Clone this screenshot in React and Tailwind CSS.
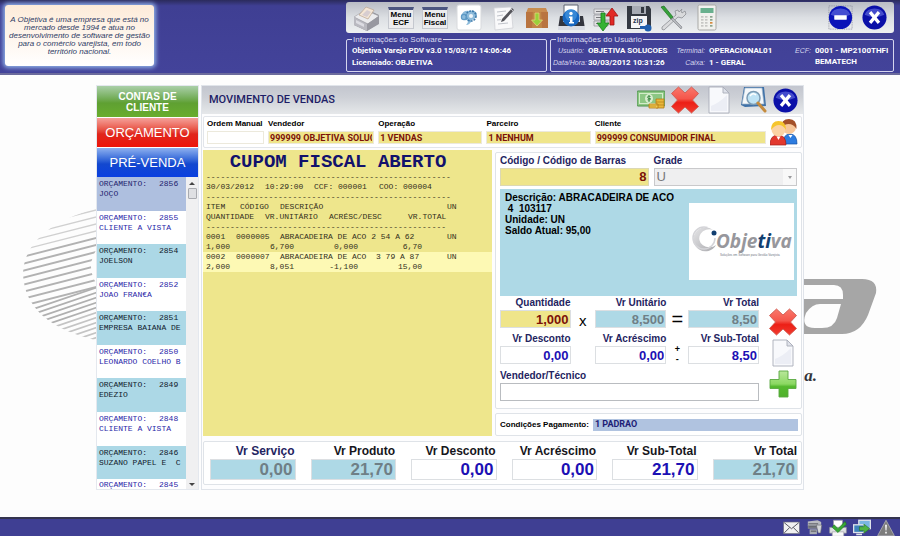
import React from "react";

const SANS = "font-['Liberation_Sans',Arial,sans-serif]";
const MONO = "font-['Liberation_Mono','Courier_New',monospace]";
const ROBOTO = "font-['Roboto','Liberation_Sans',sans-serif]";

/* ---------- icons ---------- */

function Svg({ w = 28, h = 28, box = "0 0 28 28", children }) {
  return (
    <svg width={w} height={h} viewBox={box} aria-hidden="true" className="block shrink-0">
      {children}
    </svg>
  );
}

const PrinterFiscal = () => (
  <Svg>
    <path d="M1 14 13 5l13 6v8L14 27 1 21z" fill="#8d8d94" />
    <path d="M1 13 12 6l14 6-11 8z" fill="#ececee" stroke="#a8a8ae" strokeWidth=".7" />
    <path d="M1 13v8l13 6v-7z" fill="#b9b9c0" />
    <path d="M14 20v7l12-7v-8z" fill="#9898a0" />
    <path d="m6 11 7-8 8 3-6 9z" fill="#f4e6d6" stroke="#b9a38f" strokeWidth=".7" />
    <path d="m9 11 5-5 4 2-4 5z" fill="#d7cdd0" />
    <path d="m3 16 8 4v3l-8-4z" fill="#dcdce2" />
  </Svg>
);

const MenuIcon = ({ a, b }) => (
  <span
    className={`flex h-[22px] w-[26px] flex-col items-center justify-center border border-[#c5c8cf] border-t-[3px] border-t-[#4c5680] bg-[#ececee] text-[8px] leading-[8px] font-bold text-black ${SANS}`}
  >
    <span>{a}</span>
    <span>{b}</span>
  </span>
);

const GearIcon = () => (
  <Svg>
    <rect x="2" y="1" width="24" height="25" rx="2" fill="#fff" stroke="#d8dadd" />
    <path d="M6 12q2-6 8-5 6-2 8 3-1 5-5 6-2 5-6 5 3-3 1-5-5 1-6-4z" fill="#8dbbdb" />
    <circle cx="16" cy="12" r="5" fill="none" stroke="#3d7aab" strokeWidth="1.600" strokeDasharray="2 1" />
    <circle cx="9" cy="13" r="2.600" fill="none" stroke="#5d9ac6" strokeWidth="1.200" />
    <circle cx="16" cy="12" r="2" fill="#eef5fa" />
  </Svg>
);

const NoteIcon = () => (
  <Svg>
    <path d="m5 4 17-1 2 21-18 2z" fill="#f9f9fa" stroke="#cfd1d6" strokeWidth=".8" />
    <path d="m8 8 9-1M8 12l6-1M8 16l4-.3M9 20l10-1" stroke="#b9bcc4" strokeWidth=".9" />
    <path d="M23 4 13 15l-1 3 3-1L25 6z" fill="#55555b" />
    <path d="m22 5 2 2" stroke="#bcbcc3" />
  </Svg>
);

const BoxDown = () => (
  <Svg>
    <path d="M5 4h18l2 5H3z" fill="#c98b50" />
    <path d="M3 8h22v16H3z" fill="#b97440" />
    <path d="M10 4h8l1 20H9z" fill="#c6924b" opacity=".6" />
    <path d="M12 9h4v7h3.500L14 22l-5.500-6H12z" fill="#9ad03a" stroke="#e5d27a" strokeWidth=".8" />
  </Svg>
);

const PrinterInfo = () => (
  <Svg>
    <path d="M7 1h14v15H7z" fill="#fff" stroke="#5c6270" />
    <path d="M3 12h3v6h17v-6h3l2 13H1z" fill="#34363e" />
    <path d="M1 22h27v4H1z" fill="#d9dce3" />
    <circle cx="14" cy="14" r="8.500" fill="#1767c0" />
    <circle cx="14" cy="11" r="6" fill="#4c9fe4" opacity=".6" />
    <circle cx="14" cy="9.500" r="1.700" fill="#fff" />
    <path d="M12 12.500h3.500V18H17v1.500h-5V18h1v-4h-1z" fill="#fff" />
  </Svg>
);

const SyncDb = () => (
  <Svg>
    <path d="M3 5h17v5H3zM3 11h17v5H3zM3 17h14v5H3z" fill="#e2e2e4" stroke="#9b9ba0" strokeWidth=".8" />
    <path d="M5 7.500h8M5 13.500h8M5 19.500h6" stroke="#77777c" />
    <path d="M10 9h4v10h4l-6 8-6-8h4z" fill="#34b233" stroke="#1b7d1d" strokeWidth=".8" />
    <path d="m21 4 6 8h-4v9h-4v-9h-4z" fill="#e22a25" stroke="#9f1512" strokeWidth=".8" />
  </Svg>
);

const FloppyZip = () => (
  <Svg>
    <path d="M2 2h22l2 3v20H2z" fill="#343942" />
    <path d="M7 2h14v8H7z" fill="#a7abb4" />
    <path d="M16 3h3v6h-3z" fill="#343942" />
    <path d="M6 12h16v12H6z" fill="#f4f5f7" />
    <text x="8" y="19" fontSize="7" fontWeight="700" fontFamily="Liberation Sans" fill="#24344f">zip</text>
    <circle cx="23" cy="24" r="3.500" fill="#1f5fae" />
    <path d="M15 22h6v3h-6z" fill="#1f5fae" />
  </Svg>
);

const ToolsIcon = () => (
  <Svg>
    <path d="m23 5-3 3-1-2-3 1 1 4L3 23q-1 3 2 3l14-13 4 1 4-4-1-3-3 2-1-2z" fill="#d9dadc" stroke="#8d8f94" strokeWidth=".8" />
    <path d="m2 3 3-1 9 11-2 2z" fill="#36a13a" stroke="#1d6e22" strokeWidth=".7" />
    <path d="m14 14 9 9-1 2-10-10z" fill="#b7b9be" stroke="#7b7d83" strokeWidth=".6" />
  </Svg>
);

const CalcIcon = () => (
  <Svg>
    <rect x="5" y="1" width="18" height="25" rx="1.500" fill="#f1f1ee" stroke="#a9a9a6" />
    <rect x="7.500" y="4" width="13" height="5" fill="#69b08e" />
    {[12, 15, 18, 21].map((y) => (
      <g key={y}>
        <rect x="8" y={y} width="2.500" height="1.700" fill="#c6c6c4" />
        <rect x="12" y={y} width="2.500" height="1.700" fill="#c6c6c4" />
        <rect x="17" y={y} width="2.500" height="1.700" fill={y === 18 ? "#d78a3d" : "#8aa58d"} />
      </g>
    ))}
  </Svg>
);

const RoundMinus = () => (
  <Svg w={25} h={25}>
    <rect x="1" y="1" width="26" height="26" fill="none" stroke="#77798c" strokeWidth=".8" strokeDasharray="1 1" />
    <circle cx="14" cy="14" r="13" fill="#0b14b8" />
    <path d="M3 11a11.500 10 0 0 1 22 0q-11 5-22 0z" fill="#5d66dc" opacity=".7" />
    <rect x="7" y="11.500" width="14" height="5" rx=".5" fill="#fff" />
  </Svg>
);

const RoundX = () => (
  <Svg w={25} h={25}>
    <circle cx="14" cy="14" r="13.500" fill="#0b10a8" />
    <path d="M3 11a11.500 10 0 0 1 22 0q-11 5-22 0z" fill="#5d66dc" opacity=".7" />
    <path d="m9 8 10 12M19 8 9 20" stroke="#fff" strokeWidth="3.600" />
  </Svg>
);

const MoneyIcon = () => (
  <Svg>
    <rect x="0" y="5" width="28" height="15" rx="1" fill="#8cc784" stroke="#4b8f4a" />
    <rect x="2.500" y="7.500" width="23" height="10" fill="none" stroke="#d3ecca" />
    <ellipse cx="12" cy="12.500" rx="4" ry="4.500" fill="#d8edcf" />
    <path d="M13.500 10.500q-3-1-3 .7t3 1.400q0 2.400-3 1.200M12 9v7" fill="none" stroke="#3f8a45" />
    <path d="M19 13h8v9h-8z" fill="#e9b83a" stroke="#b47b18" strokeWidth=".8" />
    <path d="M12 18h9v4h-9z" fill="#f2cb52" stroke="#b47b18" strokeWidth=".8" />
    <path d="M19 16h8M19 19h8M12 20h7" stroke="#b47b18" strokeWidth=".7" />
  </Svg>
);

const RedX = () => (
  <Svg>
    <defs>
      <linearGradient id="redx" x1="0" y1="0" x2="0" y2="1">
        <stop offset="0" stopColor="#f9796d" />
        <stop offset=".45" stopColor="#f5564b" />
        <stop offset=".6" stopColor="#ec1f16" />
        <stop offset="1" stopColor="#f23c30" />
      </linearGradient>
    </defs>
    <path d="M7.500 1 14 7l6.500-6L27.500 7.500 21.500 14l6 6.500-7 6.500L14 21l-6.500 6-7-6.500 6-6.500-6-6.500z" fill="url(#redx)" stroke="#cf5a50" strokeWidth=".9" strokeLinejoin="round" />
  </Svg>
);

const PageIcon = () => (
  <Svg>
    <path d="M4 1h14l6 6v20H4z" fill="#f8f9fc" stroke="#a9adb9" strokeWidth=".9" />
    <path d="M18 1v6h6z" fill="#dfe2ea" stroke="#a9adb9" strokeWidth=".9" />
    <path d="M6 20q8-3 16-11v16H6z" fill="#eceef5" />
  </Svg>
);

const SearchBook = () => (
  <Svg>
    <path d="M5 1h20l2 19-21 1-4-2z" fill="#3f71a8" />
    <path d="m6 2 17 0 2 16H3z" fill="#f5f8fb" stroke="#9fb4c9" strokeWidth=".7" />
    <circle cx="14.500" cy="12" r="6.500" fill="#bfe3f5" stroke="#7c9cb5" strokeWidth="1.500" />
    <path d="M11 10q3-4 6-1" stroke="#fff" strokeWidth="1.500" fill="none" />
    <path d="m19 17 7 8" stroke="#c58b3d" strokeWidth="3" strokeLinecap="round" />
  </Svg>
);

const PeopleIcon = () => (
  <Svg>
    <path d="M13 26q0-10 7-10t7 10z" fill="#2d7ce0" stroke="#1552a4" strokeWidth=".7" />
    <circle cx="19" cy="9" r="7" fill="#f7c79a" />
    <path d="M11 10q0-9 8-9t7.500 10q-3-5-8-5-4 0-7.500 4z" fill="#a4512a" />
    <path d="M0 27q0-10 8-10t8 10z" fill="#e2382e" stroke="#a31d17" strokeWidth=".7" />
    <circle cx="8.500" cy="11.500" r="7" fill="#fbd2a4" />
    <path d="M1 12q0-9 7.500-9t7.500 9q-3-5-7-5T1 12z" fill="#f5c52d" />
    <path d="m6.500 18.500 2 3.500 2-3.500z" fill="#fff" />
    <path d="m18.500 17 2 3 2-3z" fill="#fff" />
  </Svg>
);

const PlusIcon = () => (
  <Svg>
    <defs>
      <linearGradient id="plus" x1="0" y1="0" x2="0" y2="1">
        <stop offset="0" stopColor="#b9e79b" />
        <stop offset=".5" stopColor="#8bd862" />
        <stop offset=".6" stopColor="#55b92f" />
        <stop offset="1" stopColor="#4fb02b" />
      </linearGradient>
    </defs>
    <path d="M10 1h9v8.500h8v9h-8V27h-9v-8.500H1v-9h9z" fill="url(#plus)" stroke="#5aa842" strokeWidth=".9" />
  </Svg>
);

const Mail = () => (
  <Svg w={17} h={17}>
    <rect x="1" y="5" width="26" height="19" fill="#f1f1f1" stroke="#6d6d78" />
    <path d="m2 6 12 10L26 6M2 23l9-9M26 23l-9-9" fill="none" stroke="#55555f" strokeWidth="1.600" />
  </Svg>
);
const ServerMini = () => (
  <Svg w={17} h={17}>
    <path d="M3 4 19 2l6 3v6H3z" fill="#b9bbc1" />
    <path d="M3 10h20v6H3z" fill="#8d9097" />
    <path d="M6 17h12v8H6z" fill="#a8abb2" />
    <path d="M4 8h16M4 13h14M8 20h9" stroke="#4d4f57" strokeWidth="1.500" />
    <path d="M17 10h9l-2 13h-4z" fill="#d4d6da" stroke="#63656c" />
  </Svg>
);
const PrinterOk = () => (
  <Svg w={18} h={18}>
    <path d="M7 2h14v12H7z" fill="#fff" stroke="#9a9aa1" />
    <path d="M1 13h26v9H1z" fill="#dfe1e4" stroke="#8d9097" />
    <path d="M5 20h18v7H5z" fill="#f8f8f8" stroke="#9a9aa1" />
    <path d="m8 9 6 6L25 4l2 4-13 13L5 13z" fill="#39a935" stroke="#1e7a20" />
  </Svg>
);
const NetMini = () => (
  <Svg w={18} h={18}>
    <rect x="9" y="2" width="18" height="13" fill="#7ab6e2" stroke="#dfe3ea" strokeWidth="2" />
    <rect x="1" y="9" width="16" height="12" fill="#3f83bd" stroke="#dfe3ea" strokeWidth="2" />
    <path d="M5 24h9" stroke="#dfe3ea" strokeWidth="2.500" />
    <path d="M10 12h7V8l9 7-9 7v-4h-7z" fill="#4fb445" stroke="#22742a" />
  </Svg>
);
const Warn = () => (
  <Svg w={18} h={18}>
    <path d="m14 2 13 24H1z" fill="#7c7c7c" stroke="#b0b0b0" strokeWidth="1.300" />
    <path d="M12.500 9h3l-.7 9h-1.600zM12.700 20h2.600v2.600h-2.600z" fill="#f4f4f4" />
  </Svg>
);

/* ---------- background brand ---------- */

function Hatch() {
  const upper = Array.from({ length: 12 }, (_, i) => 222 + i * 7);
  const lower = Array.from({ length: 14 }, (_, i) => 307 + i * 5);
  return (
    <svg width="100" height="150" viewBox="0 200 100 150" aria-hidden="true" className="absolute top-[125px] left-0">
      <defs>
        <clipPath id="globe">
          <path d="M100 207Q24 228 23 274 25 325 100 341V288Q82 268 100 244Z" />
        </clipPath>
      </defs>
      <g clipPath="url(#globe)" fill="none">
        {upper.map((y, i) => (
          <path key={y} d={`M10 ${y + 10}L104 ${y - 14}`} stroke={i < 4 ? "#d0d0d0" : "#b2b2b2"} strokeWidth={i < 4 ? 1.3 : 2} />
        ))}
        {lower.map((y, i) => (
          <path key={y} d={`M10 ${y + 10}L104 ${y - 22}`} stroke={i < 5 ? "#b0b0b0" : "#c4c4c4"} strokeWidth="1.800" />
        ))}
      </g>
    </svg>
  );
}

function LetterMark() {
  return (
    <div className="absolute top-[203px] right-[20px]">
      <svg width="80" height="58" viewBox="800 278 80 58" aria-hidden="true" className="block">
        <path
          fillRule="evenodd"
          fill="#a6a6a6"
          d="M800 279H862Q878 279 876 293L868 315Q860 334 842 334H800ZM800 285V299H843V295Q843 285 834 285ZM841 304H820Q812 304 806 313 800 328 815 328H822Q834 328 837 318Z"
        />
      </svg>
      <p className="mt-[30px] pr-[63px] text-right font-['Liberation_Serif',serif] text-[17px] leading-[20px] font-bold text-[#33343a] italic">a.</p>
    </div>
  );
}

/* ---------- header ---------- */

const TOOLS = [
  ["Impressora fiscal", <PrinterFiscal />],
  ["", <MenuIcon a="Menu" b="ECF" />],
  ["", <MenuIcon a="Menu" b="Fiscal" />],
  ["Configurações", <GearIcon />],
  ["Anotações", <NoteIcon />],
  ["Importar", <BoxDown />],
  ["Relatórios", <PrinterInfo />],
  ["Sincronizar", <SyncDb />],
  ["Backup", <FloppyZip />],
  ["Ferramentas", <ToolsIcon />],
  ["Calculadora", <CalcIcon />],
];

function IconButton({ label, children }) {
  return (
    <button type="button" aria-label={label || undefined} className="flex shrink-0 items-center justify-center">
      {children}
    </button>
  );
}

function Header() {
  const term = "text-right text-[7px] font-normal text-[#d6d6ee] italic font-['Liberation_Sans',Arial,sans-serif]";
  return (
    <header className="flex border-b-2 border-[#6b6b9c] bg-linear-to-b from-[#2b2b5c] via-[#3f3f93] via-8% to-[#43439a] pt-[2px] pr-[6px] pb-px">
      <aside className="mt-[3px] ml-[5px] flex h-[61px] w-[149px] shrink-0 items-center justify-center rounded-[3px] bg-linear-to-b from-[#fdebd9] to-white text-center text-[8px] leading-[8px] whitespace-nowrap text-[#2f3c66] italic shadow-[0_0_4px_2px_#8fb0e6]">
        A Objetiva é uma empresa que está no<br />
        mercado desde 1994 e atua no<br />
        desenvolvimento de software de gestão<br />
        para o comércio varejista, em todo<br />
        território nacional.
      </aside>
      <div className="ml-[192px] flex min-w-0 flex-1 flex-col">
        <nav className="flex h-[31px] items-center justify-between rounded-[3px] bg-linear-to-b from-[#b9bcc4] via-[#dcdfe3] to-[#eef0f1] px-[7px]">
          <div className="flex gap-[6px]">
            {TOOLS.map(([label, icon], i) => (
              <IconButton key={i} label={label}>
                <span className="flex w-[28px] justify-center">{icon}</span>
              </IconButton>
            ))}
          </div>
          <div className="flex gap-[9px]">
            <IconButton label="Minimizar"><RoundMinus /></IconButton>
            <IconButton label="Fechar"><RoundX /></IconButton>
          </div>
        </nav>
        <div className="mt-[2px] flex gap-[3px] text-[8px] leading-[12px] text-white">
          <fieldset className="h-[37px] w-[201px] shrink-0 rounded-[2px] border border-[#d5d5ee] px-[5px]">
            <legend className="px-[1px] leading-[9px] text-[#dcdcf2]">Informações do Software</legend>
            <p className={`pt-px font-bold whitespace-nowrap ${ROBOTO}`}>Objetiva Varejo PDV v3.0 15/03/12 14:06:46</p>
            <p className={`font-bold ${ROBOTO}`}>Licenciado: OBJETIVA</p>
          </fieldset>
          <fieldset className="h-[37px] min-w-0 flex-1 rounded-[2px] border border-[#d5d5ee] px-[2px]">
            <legend className="ml-[3px] px-[1px] leading-[9px] text-[#dcdcf2]">Informações do Usuário</legend>
            <dl className={`grid grid-cols-[31px_82px_31px_67px_31px_auto] justify-start gap-x-[4px] pt-px font-bold whitespace-nowrap ${ROBOTO}`}>
              <dt className={term}>Usuário:</dt>
              <dd>OBJETIVA SOLUCOES</dd>
              <dt className={term}>Terminal:</dt>
              <dd>OPERACIONAL01</dd>
              <dt className={term}>ECF:</dt>
              <dd className="row-span-2 leading-[11px]">0001 - MP2100THFI<br />BEMATECH</dd>
              <dt className={term}>Data/Hora:</dt>
              <dd>30/03/2012 10:31:26</dd>
              <dt className={term}>Caixa:</dt>
              <dd>1 - GERAL</dd>
            </dl>
          </fieldset>
        </div>
      </div>
    </header>
  );
}

/* ---------- sidebar ---------- */

const ORDERS = [
  ["2856", "JOÇO"],
  ["2855", "CLIENTE A VISTA"],
  ["2854", "JOELSON"],
  ["2852", "JOAO FRAN€A"],
  ["2851", "EMPRESA BAIANA DE"],
  ["2850", "LEONARDO COELHO B"],
  ["2849", "EDEZIO"],
  ["2848", "CLIENTE A VISTA"],
  ["2846", "SUZANO PAPEL E  C"],
  ["2845", ""],
];

function rowStyle(i) {
  if (i === 0) return "flex-1 pt-[2px] bg-[#aebfdf] text-[#24246e]";
  if (i === 9) return "h-[10px] bg-white pt-px text-[#2a1fa8]";
  return i % 2 ? "flex-1 pt-[2px] bg-white text-[#2a1fa8]" : "flex-1 pt-[2px] bg-[#acd8e6] text-[#10202c]";
}

function Sidebar() {
  return (
    <aside className="flex w-[103px] shrink-0 flex-col border border-[#e4e8ee] bg-white">
      <div className="flex flex-col gap-px text-white">
        <button type="button" className="h-[31px] bg-linear-to-b from-[#aacfa8] via-[#5fa032] via-55% to-[#69ad2d] text-[10px] leading-[11px] font-bold">
          CONTAS DE<br />CLIENTE
        </button>
        <button type="button" className="h-[29px] bg-linear-to-b from-[#f4a09a] via-[#e0261c] via-55% to-[#ee1408] text-[13px]">ORÇAMENTO</button>
        <button type="button" className="h-[29px] bg-linear-to-b from-[#8fb0ee] via-[#1348cf] via-55% to-[#0a3fe0] text-[13px]">PRÉ-VENDA</button>
      </div>
      <div className="flex h-[312px]">
        <ul className={`flex min-w-0 flex-1 flex-col text-[8px] leading-[10px] ${MONO}`}>
          {ORDERS.map(([num, name], i) => (
            <li key={num} className={`px-[2px] whitespace-pre ${rowStyle(i)}`}>
              <div className="flex gap-[12px]"><span>ORÇAMENTO:</span><span>{num}</span></div>
              {name && <div>{name}</div>}
            </li>
          ))}
        </ul>
        <div className="flex w-[12px] flex-col items-center bg-[#f0f0f1]">
          <span className="mt-[5px] border-x-[3px] border-b-[3px] border-x-transparent border-b-[#444]" />
          <span className="mt-[3px] h-[11px] w-[9px] rounded-[1px] border border-[#a9abb0] bg-[#dfe0e3]" />
          <span className="mt-auto mb-[3px] border-x-[3px] border-t-[3px] border-x-transparent border-t-[#444]" />
        </div>
      </div>
    </aside>
  );
}

/* ---------- sales panel ---------- */

function TopField({ id, label, value, tone }) {
  return (
    <div className="min-w-0">
      <label htmlFor={id} className="block text-[8px] leading-[14px] font-bold whitespace-nowrap text-black">{label}</label>
      <input
        id={id}
        defaultValue={value}
        className={`block h-[13px] w-full border border-[#ece9dc] px-px text-[9px] leading-[11px] font-bold text-[#7c1208] ${ROBOTO} ${tone}`}
      />
    </div>
  );
}

const DASH = "-".repeat(51);
const ITEMS = [
  ["0001", "0000005", "ABRACADEIRA DE ACO 2 54 A 62", "1,000", "6,700", "0,000", "6,70"],
  ["0002", "0000007", "ABRACADEIRA DE ACO  3 79 A 87", "2,000", "8,051", "-1,100", "15,00"],
];

function Receipt() {
  return (
    <section className={`w-[289px] shrink-0 bg-[#eee68c] ${MONO} text-[8px] leading-[10px] text-[#33301c]`}>
      <h2 className="pt-[2px] pr-[19px] text-center text-[19px] leading-[20px] font-bold text-[#12126c]">CUPOM FISCAL ABERTO</h2>
      <div className="flex flex-col pl-[3px]">
        <p>{DASH}</p>
        <p className="flex whitespace-nowrap">
          <span className="w-[59px]">30/03/2012</span>
          <span className="w-[49px]">10:29:00</span>
          <span className="w-[65px]">CCF: 000001</span>
          <span>COO: 000004</span>
        </p>
        <p>{DASH}</p>
      </div>
      <table className="w-full table-fixed border-collapse whitespace-pre">
        <colgroup>
          <col className="w-[33px]" /><col className="w-[29px]" /><col className="w-[15px]" /><col className="w-[14px]" />
          <col className="w-[35px]" /><col className="w-[29px]" /><col className="w-[50px]" /><col className="w-[14px]" />
          <col className="w-[25px]" /><col />
        </colgroup>
        <thead className="text-left">
          <tr>
            <th className="p-0 pl-[3px] font-normal">ITEM</th>
            <th colSpan={2} className="p-0 pl-[4px] font-normal">CÓDIGO</th>
            <th colSpan={6} className="p-0 font-normal">DESCRIÇÃO</th>
            <th className="p-0 font-normal">UN</th>
          </tr>
          <tr>
            <th colSpan={2} className="p-0 pl-[3px] font-normal">QUANTIDADE</th>
            <th colSpan={3} className="p-0 font-normal">VR.UNITÁRIO</th>
            <th colSpan={2} className="p-0 font-normal">ACRÉSC/DESC</th>
            <th colSpan={3} className="p-0 font-normal">VR.TOTAL</th>
          </tr>
          <tr><td colSpan={10} className="p-0 pl-[3px]">{"-".repeat(50)}</td></tr>
        </thead>
        {ITEMS.map(([n, code, desc, qty, unit, adj, total], i) => (
          <tbody key={n} className={i ? "bg-[#fdf9b4]" : ""}>
            <tr>
              <td className="p-0 pl-[3px]">{n}</td>
              <td colSpan={2} className="p-0">{code}</td>
              <td colSpan={6} className="p-0">{desc}</td>
              <td className="p-0">UN</td>
            </tr>
            <tr>
              <td colSpan={2} className="p-0 pl-[3px]">{qty}</td>
              <td colSpan={2} className="p-0 text-right">{unit}</td>
              <td colSpan={2} className="p-0 text-right">{adj}</td>
              <td colSpan={2} className="p-0 text-right">{total}</td>
              <td colSpan={2} className="p-0" />
            </tr>
          </tbody>
        ))}
      </table>
    </section>
  );
}

function ProductLogo() {
  return (
    <div className="flex h-[77px] w-[105px] shrink-0 items-center justify-center bg-white">
      <svg width="105" height="77" viewBox="0 0 105 77" role="img" aria-label="Objetiva">
        <defs>
          <linearGradient id="ball" x1="0" y1="0" x2="1" y2="1">
            <stop offset="0" stopColor="#e6e6e8" />
            <stop offset="1" stopColor="#a9a9ad" />
          </linearGradient>
        </defs>
        <path d="M24 27A12 12 0 1 0 27 42 10 9 0 1 1 24 27Z" fill="url(#ball)" />
        <circle cx="15" cy="35" r="11" fill="none" stroke="#d4d4d8" strokeWidth="1.500" strokeDasharray="55 14" />
        <circle cx="25" cy="30" r="2.500" fill="#123f70" />
        <text x="27" y="45" fontFamily="Open Sans, sans-serif" fontSize="19" fontWeight="700" fontStyle="italic" fill="#97979c">
          Obje<tspan fill="#123f70">ti</tspan>va
        </text>
        <text x="31" y="53" fontFamily="Liberation Sans, sans-serif" fontSize="3" fill="#6e7480">Soluções em Software para Gestão Varejista</text>
      </svg>
    </div>
  );
}

function Amount({ id, label, value, tone }) {
  return (
    <div className="flex min-w-0 flex-col">
      <label htmlFor={id} className="text-right text-[10px] leading-[14px] font-bold whitespace-nowrap text-[#24245f]">{label}</label>
      <input
        id={id}
        defaultValue={value}
        className={`h-[18px] w-full border border-[#dcdfe2] px-px text-right text-[13px] leading-[16px] font-bold ${tone}`}
      />
    </div>
  );
}

function ItemEntry() {
  return (
    <section className="flex flex-1 flex-col rounded-[2px] border border-[#dfe3e8] bg-white px-[4px] pb-[7px]">
      <div className="grid grid-cols-[147fr_142fr] gap-x-[5px]">
        <label htmlFor="codigo" className="text-[10px] leading-[15px] font-bold text-[#24245f]">Código / Código de Barras</label>
        <label htmlFor="grade" className="text-[10px] leading-[15px] font-bold text-[#24245f]">Grade</label>
        <input id="codigo" defaultValue="8" className="block h-[18px] w-full border border-[#dcd8b4] bg-[#efe58a] px-px text-right text-[13px] font-bold text-[#7c1208]" />
        <div className="relative h-[18px]">
          <select id="grade" defaultValue="U" className="block h-[18px] w-full appearance-none border border-[#c9c9cb] bg-[#efeff0] px-[2px] text-[13px] leading-[16px] text-[#77777a]">
            <option>U</option>
          </select>
          <span className="pointer-events-none absolute top-px right-px flex h-[16px] w-[13px] items-center justify-center bg-[#f8f8f8]">
            <span className="border-x-2 border-t-[3px] border-x-transparent border-t-[#9a9a9d]" />
          </span>
        </div>
      </div>
      <div className="mt-[3px] flex h-[107px] items-start justify-between bg-[#aed9e6] pr-[3px] pl-[5px]">
        <p className="pt-[3px] text-[10px] leading-[11px] font-bold whitespace-pre text-black">
          {"Descrição: ABRACADEIRA DE ACO\n 4  103117\nUnidade: UN\nSaldo Atual: 95,00"}
        </p>
        <div className="-ml-[60px] pt-[14px]"><ProductLogo /></div>
      </div>
      <div className="flex gap-[9px]">
        <div className="flex flex-1 flex-col">
          <div className="grid grid-cols-[70fr_24fr_71fr_22fr_70fr] gap-y-[4px] text-center text-black">
            <Amount id="qtd" label="Quantidade" value="1,000" tone="bg-[#efe58a] text-[#7c1208]" />
            <span className="pt-[17px] text-[15px] leading-[15px]">x</span>
            <Amount id="unit" label="Vr Unitário" value="8,500" tone="bg-[#aed9e6] text-[#6f7f86]" />
            <span className="pt-[14px] text-[20px] leading-[18px]">=</span>
            <Amount id="tot" label="Vr Total" value="8,50" tone="bg-[#aed9e6] text-[#6f7f86]" />
            <Amount id="desc" label="Vr Desconto" value="0,00" tone="bg-white text-[#1c10b4]" />
            <span />
            <Amount id="acr" label="Vr Acréscimo" value="0,00" tone="bg-white text-[#1c10b4]" />
            <span className="pt-[12px] text-[9px] leading-[10px] font-bold">+<br />-</span>
            <Amount id="sub" label="Vr Sub-Total" value="8,50" tone="bg-white text-[#1c10b4]" />
          </div>
          <label htmlFor="vend" className="mt-[5px] text-[10px] leading-[14px] font-bold text-[#24245f]">Vendedor/Técnico</label>
          <input id="vend" className="h-[18px] w-full border border-[#b9bcc0] bg-white px-1 text-[13px]" />
        </div>
        <div className="flex w-[29px] flex-col items-center gap-[3px] pt-[12px]">
          <IconButton label="Cancelar item"><RedX /></IconButton>
          <IconButton label="Novo item"><PageIcon /></IconButton>
          <IconButton label="Adicionar item"><PlusIcon /></IconButton>
        </div>
      </div>
    </section>
  );
}

const TOTALS = [
  ["Vr Serviço", "0,00", "text-[#24245f]", "bg-[#aed9e6] text-[#6f7f86]"],
  ["Vr Produto", "21,70", "text-[#16161c]", "bg-[#aed9e6] text-[#6f7f86]"],
  ["Vr Desconto", "0,00", "text-[#16161c]", "bg-white text-[#1c10b4]"],
  ["Vr Acréscimo", "0,00", "text-[#16161c]", "bg-white text-[#1c10b4]"],
  ["Vr Sub-Total", "21,70", "text-[#16161c]", "bg-white text-[#1c10b4]"],
  ["Vr Total", "21,70", "text-[#16161c]", "bg-[#aed9e6] text-[#6f7f86]"],
];

function SalesPanel() {
  return (
    <section className="flex min-w-0 flex-1 flex-col border border-[#e0e4ea] bg-[#fdfdfe] px-px pb-[3px]">
      <div className="-mx-px flex h-[28px] items-center justify-between bg-linear-to-b from-[#c3c6cf] via-[#cdd0d6] via-40% to-[#e6e8ea] pr-[5px] pl-[7px]">
        <h1 className={`text-[11px] font-medium text-[#1d1d66] ${ROBOTO}`}>MOVIMENTO DE VENDAS</h1>
        <div className="flex items-center gap-[6px]">
          <IconButton label="Pagamento"><MoneyIcon /></IconButton>
          <IconButton label="Cancelar venda"><RedX /></IconButton>
          <IconButton label="Nova venda"><PageIcon /></IconButton>
          <IconButton label="Consultar"><SearchBook /></IconButton>
          <IconButton label="Sair"><RoundX /></IconButton>
        </div>
      </div>
      <div className="mt-[2px] grid h-[32px] grid-cols-[57px_106fr_104fr_104fr_171fr_28px] gap-x-[4px] rounded-[2px] border border-[#e2e5ea] bg-white px-[3px]">
        <TopField id="ordem" label="Ordem Manual" value="" tone="bg-white" />
        <TopField id="vendedor" label="Vendedor" value="999999 OBJETIVA SOLUCOES" tone="bg-[#efe58a]" />
        <TopField id="operacao" label="Operação" value="1 VENDAS" tone="bg-[#efe58a]" />
        <TopField id="parceiro" label="Parceiro" value="1 NENHUM" tone="bg-[#efe58a]" />
        <TopField id="cliente" label="Cliente" value="999999 CONSUMIDOR FINAL" tone="bg-[#efe58a]" />
        <IconButton label="Clientes"><PeopleIcon /></IconButton>
      </div>
      <div className="mt-[2px] flex gap-[3px]">
        <Receipt />
        <div className="flex min-w-0 flex-1 flex-col gap-[4px] pt-[2px]">
          <ItemEntry />
          <div className="flex h-[23px] items-center gap-[4px] rounded-[2px] border border-[#dfe3e8] bg-white px-[3px]">
            <label htmlFor="cond" className="pl-px text-[8px] font-bold whitespace-nowrap text-black">Condições Pagamento:</label>
            <input id="cond" defaultValue="1 PADRAO" className={`h-[12px] min-w-0 flex-1 bg-[#b0c3e0] px-[2px] text-[9px] font-bold text-[#1d1d76] ${ROBOTO}`} />
          </div>
        </div>
      </div>
      <div className="mt-[5px] grid grid-cols-6 gap-x-[15px] rounded-[2px] border border-[#dfe3e8] bg-white pt-px pr-[3px] pb-[4px] pl-[6px]">
        {TOTALS.map(([label, value, labelTone, tone], i) => (
          <div key={label} className="flex min-w-0 flex-col">
            <label htmlFor={`t${i}`} className={`pr-px text-right text-[12px] leading-[16px] font-bold whitespace-nowrap ${labelTone}`}>{label}</label>
            <input id={`t${i}`} defaultValue={value} className={`h-[21px] w-full border border-[#dcdfe2] px-[2px] text-right text-[17px] leading-[19px] font-bold ${tone}`} />
          </div>
        ))}
      </div>
    </section>
  );
}

export default function App() {
  return (
    <div className={`flex min-h-screen flex-col bg-[#fdfdfd] ${SANS}`}>
      <Header />
      <main className="relative flex-1 px-24 pt-[10px]">
        <Hatch />
        <LetterMark />
        <div className="relative flex gap-[2px]">
          <Sidebar />
          <SalesPanel />
        </div>
      </main>
      <footer className="flex h-[19px] items-center justify-end gap-[6px] border-t-2 border-[#34344e] bg-[#3f3f93] pr-[5px]">
        <Mail />
        <ServerMini />
        <PrinterOk />
        <NetMini />
        <Warn />
      </footer>
    </div>
  );
}
